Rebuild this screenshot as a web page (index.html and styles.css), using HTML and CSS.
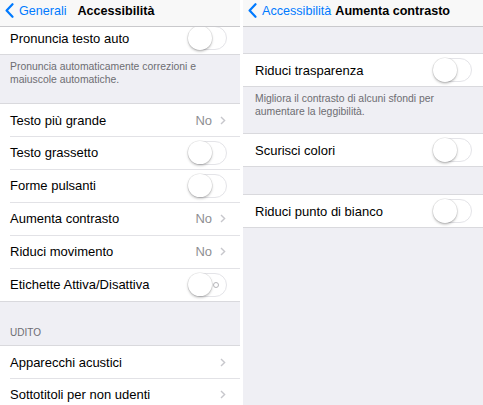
FILE: index.html
```html
<!DOCTYPE html>
<html lang="it">
<head>
<meta charset="utf-8">
<title>Accessibilità</title>
<link rel="stylesheet" href="styles.css">
</head>
<body>
<div class="screen">
  <section class="panel panel--left">
    <header class="nav nav--centered">
      <a class="nav__back">
        <svg class="nav__chevron" width="9" height="15" viewBox="0 0 9 15"><path d="M7.5 1.2 L1.6 7.5 L7.5 13.8" fill="none" stroke="#007aff" stroke-width="2.2" stroke-linecap="round" stroke-linejoin="round"/></svg>
        <span>Generali</span>
      </a>
      <h1 class="nav__title">Accessibilità</h1>
      <span class="nav__spacer"></span>
    </header>

    <div class="group group--under-nav">
      <div class="row">
        <span class="row__label">Pronuncia testo auto</span>
        <span class="switch"><span class="switch__knob"></span></span>
      </div>
    </div>
    <p class="footer footer--first">Pronuncia automaticamente correzioni e maiuscole automatiche.</p>

    <div class="group">
      <div class="row">
        <span class="row__label">Testo più grande</span>
        <span class="row__value">No</span>
        <svg class="row__chevron" width="6" height="9" viewBox="0 0 6 9"><path d="M1 1 L4.6 4.5 L1 8" fill="none" stroke="#c7c7cc" stroke-width="1.4"/></svg>
      </div>
      <div class="row">
        <span class="row__label">Testo grassetto</span>
        <span class="switch"><span class="switch__knob"></span></span>
      </div>
      <div class="row">
        <span class="row__label">Forme pulsanti</span>
        <span class="switch"><span class="switch__knob"></span></span>
      </div>
      <div class="row">
        <span class="row__label">Aumenta contrasto</span>
        <span class="row__value">No</span>
        <svg class="row__chevron" width="6" height="9" viewBox="0 0 6 9"><path d="M1 1 L4.6 4.5 L1 8" fill="none" stroke="#c7c7cc" stroke-width="1.4"/></svg>
      </div>
      <div class="row">
        <span class="row__label">Riduci movimento</span>
        <span class="row__value">No</span>
        <svg class="row__chevron" width="6" height="9" viewBox="0 0 6 9"><path d="M1 1 L4.6 4.5 L1 8" fill="none" stroke="#c7c7cc" stroke-width="1.4"/></svg>
      </div>
      <div class="row">
        <span class="row__label">Etichette Attiva/Disattiva</span>
        <span class="switch switch--labels"><span class="switch__knob"></span><span class="switch__o"></span></span>
      </div>
    </div>

    <h2 class="section-header">UDITO</h2>
    <div class="group">
      <div class="row">
        <span class="row__label">Apparecchi acustici</span>
        <svg class="row__chevron" width="6" height="9" viewBox="0 0 6 9"><path d="M1 1 L4.6 4.5 L1 8" fill="none" stroke="#c7c7cc" stroke-width="1.4"/></svg>
      </div>
      <div class="row">
        <span class="row__label">Sottotitoli per non udenti</span>
        <svg class="row__chevron" width="6" height="9" viewBox="0 0 6 9"><path d="M1 1 L4.6 4.5 L1 8" fill="none" stroke="#c7c7cc" stroke-width="1.4"/></svg>
      </div>
    </div>
  </section>

  <section class="panel panel--right">
    <header class="nav">
      <a class="nav__back">
        <svg class="nav__chevron" width="9" height="15" viewBox="0 0 9 15"><path d="M7.5 1.2 L1.6 7.5 L7.5 13.8" fill="none" stroke="#007aff" stroke-width="2.2" stroke-linecap="round" stroke-linejoin="round"/></svg>
        <span>Accessibilità</span>
      </a>
      <h1 class="nav__title">Aumenta contrasto</h1>
    </header>

    <div class="gap gap--top"></div>
    <div class="group">
      <div class="row">
        <span class="row__label">Riduci trasparenza</span>
        <span class="switch"><span class="switch__knob"></span></span>
      </div>
    </div>
    <p class="footer">Migliora il contrasto di alcuni sfondi per aumentare la leggibilità.</p>
    <div class="group">
      <div class="row">
        <span class="row__label">Scurisci colori</span>
        <span class="switch"><span class="switch__knob"></span></span>
      </div>
    </div>
    <div class="gap"></div>
    <div class="group">
      <div class="row">
        <span class="row__label">Riduci punto di bianco</span>
        <span class="switch"><span class="switch__knob"></span></span>
      </div>
    </div>
  </section>
</div>
</body>
</html>
```

FILE: styles.css
```css
* { box-sizing: border-box; }

html, body {
  margin: 0;
  padding: 0;
  background: #ffffff;
}

body {
  width: 483px;
  height: 405px;
  overflow: hidden;
  font-family: "Liberation Sans", Arial, sans-serif;
  color: #000;
  -webkit-font-smoothing: antialiased;
}

.screen {
  display: flex;
  gap: 3px;
  height: 405px;
}

.panel {
  width: 240px;
  height: 405px;
  overflow: hidden;
  background: #efeff4;
  display: flex;
  flex-direction: column;
  --inset-l: 10px;
  --inset-r: 13px;
}

.panel--right {
  --inset-l: 12px;
  --inset-r: 11px;
}

/* Navigation bar */
.nav {
  position: relative;
  z-index: 1;
  flex: none;
  height: 27px;
  padding: 0 var(--inset-r) 5px 5px;
  background: #f8f8f8;
  border-bottom: 1px solid #c9c9cc;
  display: flex;
  align-items: center;
  font-size: 12.6px;
}

.nav--centered {
  display: grid;
  grid-template-columns: 1fr auto 1fr;
}

.nav__back {
  display: flex;
  align-items: center;
  gap: 5px;
  color: #007aff;
  white-space: nowrap;
}

.nav__chevron {
  flex: none;
}

.nav__title {
  margin: 0 0 0 4px;
  font-size: 12.6px;
  font-weight: bold;
  white-space: nowrap;
}

.nav--centered .nav__title {
  margin: 0;
}

/* Groups & rows */
.group {
  flex: none;
  background: #fff;
  border-top: 1px solid #d9d9dd;
  border-bottom: 1px solid #d9d9dd;
}

.group--under-nav {
  margin-top: -5px;
  border-top: none;
}

.row {
  height: 33px;
  display: flex;
  align-items: center;
  padding: 0 var(--inset-r) 0 var(--inset-l);
  position: relative;
  font-size: 13px;
}

.row + .row::before {
  content: "";
  position: absolute;
  top: 0;
  left: var(--inset-l);
  right: 0;
  border-top: 1px solid #e2e2e6;
}

.group .row:first-child { height: 32px; }

.row__label {
  flex: 1;
  white-space: nowrap;
}

.row__value {
  color: #8e8e93;
  margin-right: 8px;
}

.row__chevron {
  flex: none;
  margin-right: 1px;
}

/* Switch */
.switch {
  flex: none;
  position: relative;
  width: 39px;
  height: 24px;
  border-radius: 12px;
  border: 1.3px solid #e4e4e8;
  background: #fff;
}

.switch__knob {
  position: absolute;
  left: -1px;
  top: -1px;
  width: 23.5px;
  height: 23.5px;
  border-radius: 50%;
  background: #fff;
  box-shadow: 0 1.5px 2.5px rgba(0, 0, 0, 0.25), 0 0 0 0.6px rgba(0, 0, 0, 0.1);
}

.switch__o {
  position: absolute;
  right: 7px;
  top: 8px;
  width: 6px;
  height: 6px;
  border-radius: 50%;
  border: 1px solid #b4b4b8;
}

/* Footers & headers */
.footer {
  flex: none;
  margin: 0;
  padding: 5px var(--inset-r) 15px var(--inset-l);
  font-size: 10.4px;
  line-height: 13px;
  color: #6d6d72;
}

.footer--first {
  padding-bottom: 17px;
}

.section-header {
  flex: none;
  margin: 0;
  padding: 25px var(--inset-l) 6px;
  font-size: 10px;
  line-height: 12px;
  font-weight: normal;
  color: #6d6d72;
}

.gap {
  flex: none;
  height: 27px;
}

.gap--top {
  height: 26px;
}
```
